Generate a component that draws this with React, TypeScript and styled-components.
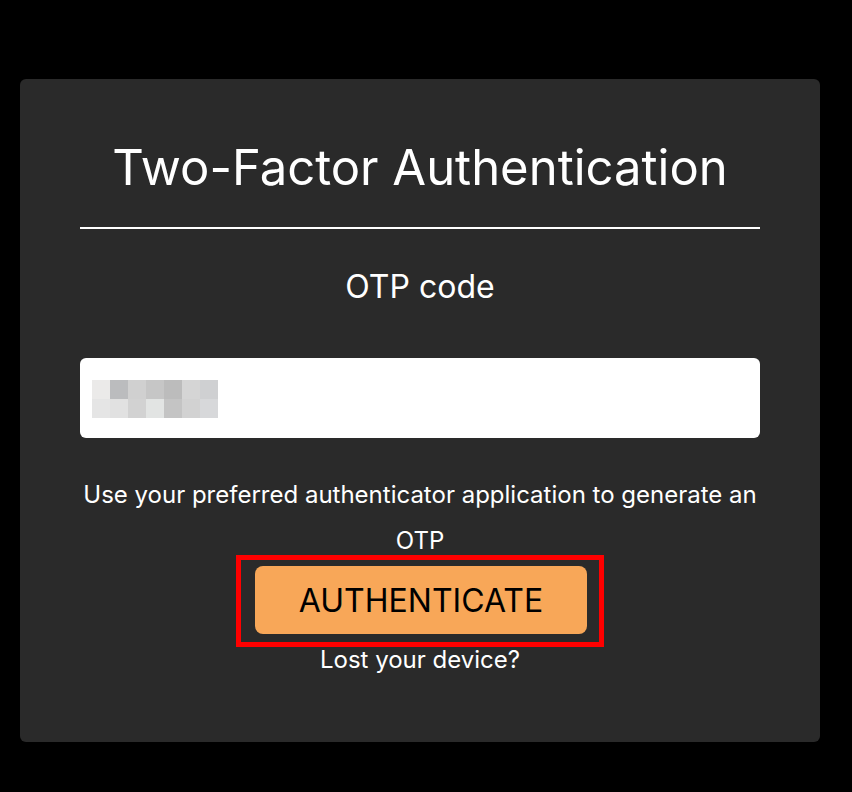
import React from "react";
import styled, { createGlobalStyle } from "styled-components";

const Global = createGlobalStyle`
  html, body { margin: 0; padding: 0; background: #000; }
  body { font-family: Inter, "Noto Sans", sans-serif; }
`;

const Page = styled.div`
  width: 852px;
  height: 792px;
  background: #000;
  padding: 79px 32px 0 20px;
  box-sizing: border-box;
`;

const Card = styled.div`
  width: 800px;
  height: 663px;
  background: #2a2a2a;
  border-radius: 6px;
  box-sizing: border-box;
  padding: 0 60px;
  display: flex;
  flex-direction: column;
  align-items: center;
  color: #fff;
`;

const Title = styled.h1`
  margin: 57px 0 0;
  font-size: 49px;
  font-weight: 400;
  line-height: 64px;
  text-align: center;
  white-space: nowrap;
`;

const Rule = styled.hr`
  width: 100%;
  border: none;
  border-top: 2px solid #fff;
  margin: 27px 0 0;
`;

const Label = styled.div`
  margin-top: 38px;
  font-size: 32px;
  line-height: 40px;
  text-align: center;
`;

const InputBox = styled.div`
  margin-top: 51px;
  width: 100%;
  height: 80px;
  background: #fff;
  border-radius: 6px;
  box-sizing: border-box;
  padding: 22px 12px;
  display: flex;
  align-items: flex-start;
`;

const Pixels = styled.div`
  display: grid;
  grid-template-columns: repeat(7, 18px);
  grid-auto-rows: 19px;
`;

const Pixel = styled.div<{ $c: string }>`
  background: ${(p) => p.$c};
`;

const Hint = styled.p`
  margin: 34px 0 -9px;
  font-size: 24px;
  line-height: 46px;
  text-align: center;
`;

const Highlight = styled.div`
  border: 5px solid #f00;
  padding: 6px 12px 8px 14px;
  display: flex;
`;

const Button = styled.button`
  width: 332px;
  height: 68px;
  background: #f8a758;
  border: none;
  border-radius: 8px;
  color: #000;
  font-family: Inter, "Noto Sans", sans-serif;
  font-size: 32px;
  font-weight: 400;
  cursor: pointer;
`;

const Lost = styled.div`
  font-size: 24px;
  line-height: 28px;
  margin-top: -1px;
  text-align: center;
`;

const colors = [
  "#ebeae9", "#bbbcbe", "#d0d0d0", "#c6c6c6", "#bcbcbc", "#d5d5d5", "#cfd0d2",
  "#e5e5e5", "#e1e1e1", "#d2d2d2", "#e2e4e3", "#c4c4c4", "#d2d2d2", "#d7d8da",
];

export default function App() {
  return (
    <>
      <Global />
      <Page>
        <Card>
          <Title>Two-Factor Authentication</Title>
          <Rule />
          <Label>OTP code</Label>
          <InputBox>
            <Pixels>
              {colors.map((c, i) => (
                <Pixel key={i} $c={c} />
              ))}
            </Pixels>
          </InputBox>
          <Hint>Use your preferred authenticator application to generate an OTP</Hint>
          <Highlight>
            <Button>AUTHENTICATE</Button>
          </Highlight>
          <Lost>Lost your device?</Lost>
        </Card>
      </Page>
    </>
  );
}
